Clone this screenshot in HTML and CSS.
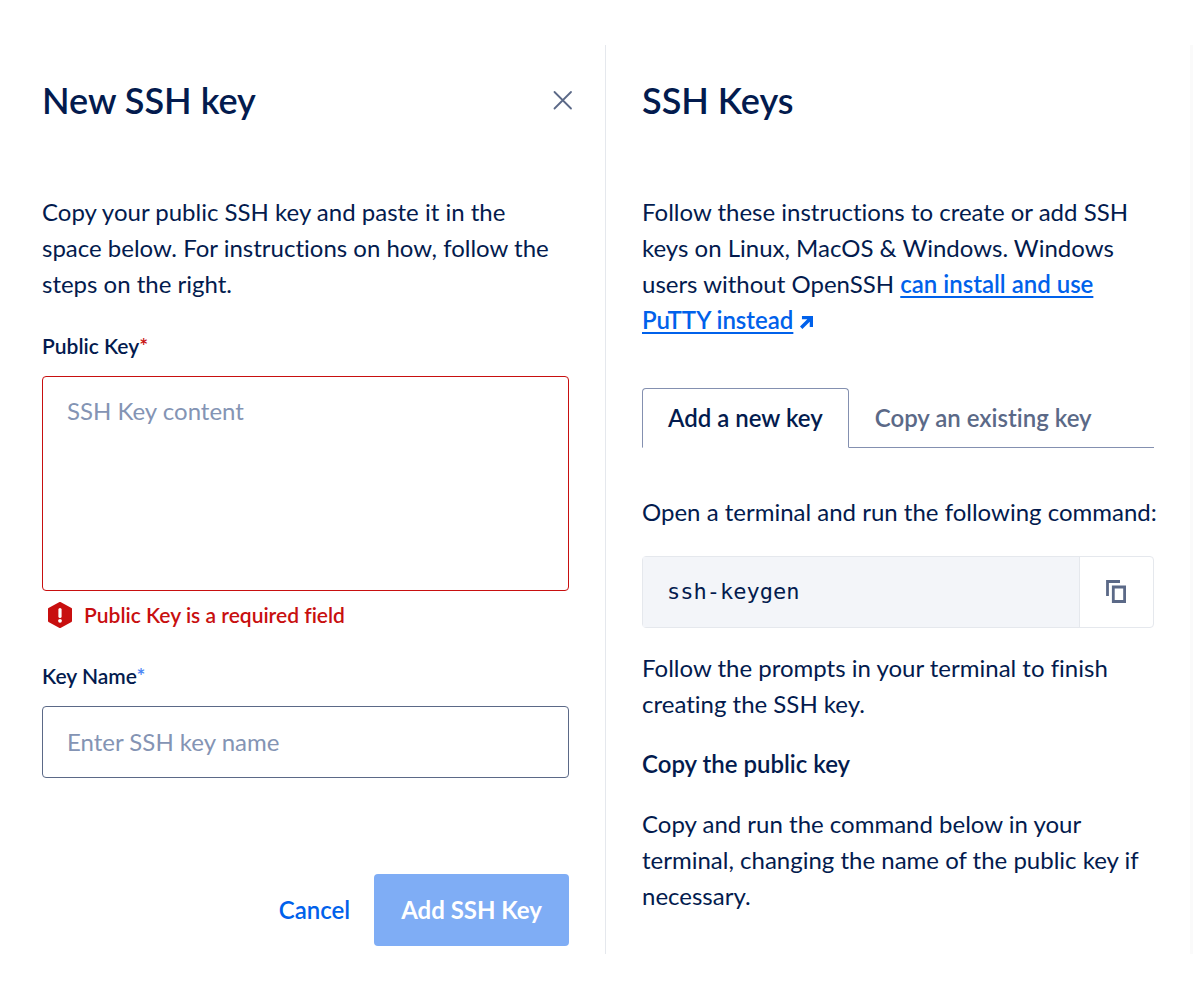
FILE: index.html
```html
<!DOCTYPE html>
<html lang="en">
<head>
<meta charset="utf-8">
<meta name="viewport" content="width=device-width, initial-scale=1">
<title>New SSH key</title>
<link rel="stylesheet" href="styles.css">
</head>
<body>
<main class="dialog">
  <form class="panel form-panel">
    <header class="panel-header">
      <h1 class="title">New SSH key</h1>
      <button class="close" type="button" aria-label="Close">
        <svg width="20" height="20" viewBox="0 0 20 20" aria-hidden="true"><path d="M1.500 2l16.500 16.500M18 2l-16.500 16.500" fill="none" stroke="currentColor" stroke-width="1.800" stroke-linecap="round"/></svg>
      </button>
    </header>
    <p class="text">Copy your public SSH key and paste it in the space below. For instructions on how, follow the steps on the right.</p>
    <div class="field">
      <label class="label" for="public-key">Public Key<span class="star star-error">*</span></label>
      <textarea class="control area" id="public-key" placeholder="SSH Key content" aria-describedby="public-key-error"></textarea>
      <p class="error" id="public-key-error">
        <svg class="error-icon" width="24" height="26" viewBox="0 0 24 26" aria-hidden="true"><path d="M12 1l11 6v12l-11 6L1 19V7z" fill="currentColor" stroke="currentColor" stroke-width="2" stroke-linejoin="round"/><path d="M12 7.500v7" stroke="#fff" stroke-width="3.200" stroke-linecap="round"/><circle cx="12" cy="18.800" r="1.900" fill="#fff"/></svg>
        Public Key is a required field
      </p>
    </div>
    <div class="field">
      <label class="label" for="key-name">Key Name<span class="star">*</span></label>
      <input class="control line" id="key-name" type="text" placeholder="Enter SSH key name">
    </div>
    <footer class="actions">
      <button class="cancel" type="button">Cancel</button>
      <button class="submit" type="submit" disabled>Add SSH Key</button>
    </footer>
  </form>
  <section class="panel help-panel">
    <header class="panel-header">
      <h2 class="title">SSH Keys</h2>
    </header>
    <p class="text">Follow these instructions to create or add SSH keys on Linux, MacOS &amp; Windows. Windows users without OpenSSH <a class="link" href="#putty">can install and use PuTTY instead</a> <svg width="13" height="13" viewBox="0 0 12 12" class="arrow" aria-hidden="true"><path d="M1.800 0H12v10.200H9V5.300L2.200 12 0 9.800 6.700 3H1.800z" fill="currentColor"/></svg></p>
    <div class="tabs" role="tablist">
      <button class="tab tab-active" type="button" role="tab" aria-selected="true">Add a new key</button>
      <button class="tab" type="button" role="tab" aria-selected="false">Copy an existing key</button>
    </div>
    <p class="text step">Open a terminal and run the following command:</p>
    <div class="command">
      <code class="code">ssh-keygen</code>
      <button class="copy" type="button" aria-label="Copy command">
        <svg width="22" height="24" viewBox="0 0 22 24" aria-hidden="true"><path d="M1.500 16V1.500H14M7.300 7h11.300v14.500H7.300z" fill="none" stroke="currentColor" stroke-width="2.800"/></svg>
      </button>
    </div>
    <p class="text">Follow the prompts in your terminal to finish creating the SSH key.</p>
    <h3 class="subtitle">Copy the public key</h3>
    <p class="text">Copy and run the command below in your terminal, changing the name of the public key if necessary.</p>
  </section>
</main>
</body>
</html>
```
FILE: styles.css
```css
* {
  box-sizing: border-box;
}

body {
  margin: 0;
  background: #fff;
  color: #031b4e;
  font-family: Lato, "Open Sans", sans-serif;
  font-size: 24px;
  line-height: 36px;
  font-variant-ligatures: none;
}

button,
input,
textarea {
  font: inherit;
}

button {
  padding: 0;
  border: 0;
  background: none;
  cursor: pointer;
}

h1,
h2,
h3,
p {
  margin: 0;
}

.dialog {
  display: grid;
  grid-template-columns: repeat(2, minmax(0, 1fr));
  padding: 45px 7px 46px 19px;
}

.form-panel {
  padding: 31px 36px 8px 23px;
  border-right: 1px solid #e5e8ed;
}

.help-panel {
  padding: 31px 36px 8px;
  border-right: 3px solid #fafafa;
}

.panel-header {
  display: flex;
  align-items: center;
  justify-content: space-between;
  margin-bottom: 70px;
}

.title {
  font-size: 36px;
  line-height: 48px;
  font-weight: 600;
}

.close {
  display: flex;
  margin-right: -4px;
  color: #5b6987;
}

.field {
  display: flex;
  flex-direction: column;
  margin-top: 24px;
}

.label {
  margin-bottom: 10px;
  font-size: 21px;
  line-height: 40px;
  font-weight: 600;
}

.star {
  color: #4a85f5;
}

.star-error {
  color: #c80f0f;
}

.control {
  width: 100%;
  border: 1px solid #5b6987;
  border-radius: 4px;
  padding: 16px 24px;
  background: #fff;
  color: inherit;
  outline: 0;
}

.control::placeholder {
  color: #8494b4;
  opacity: 1;
}

.area {
  height: 215px;
  border-color: #c80f0f;
  resize: none;
}

.line {
  height: 72px;
  padding-bottom: 18px;
}

.error {
  display: flex;
  align-items: center;
  gap: 12px;
  margin-top: 7px;
  padding-left: 6px;
  color: #c80f0f;
  font-size: 21px;
  line-height: 34px;
  font-weight: 600;
}

.actions {
  display: flex;
  justify-content: flex-end;
  gap: 24px;
  margin-top: 96px;
}

.cancel {
  color: #0061eb;
  font-weight: 600;
}

.submit {
  height: 72px;
  padding: 0 27px;
  border-radius: 4px;
  background: #7fadf5;
  color: #fff;
  font-weight: 700;
}

.link {
  color: #0061eb;
  font-weight: 600;
  text-decoration-thickness: 2px;
  text-underline-offset: 3px;
}

.arrow {
  color: #0061eb;
}

.tabs {
  display: flex;
  margin: 50px 0 46px;
  background: linear-gradient(#8490b0, #8490b0) bottom / 100% 1px no-repeat;
}

.tab {
  height: 60px;
  padding: 0 26px;
  color: #5b6987;
  font-weight: 600;
}

.tab-active {
  padding: 0 25px;
  border: 1px solid #8490b0;
  border-bottom-color: #fff;
  border-radius: 4px 4px 0 0;
  background: #fff;
  color: #031b4e;
}

.command {
  display: flex;
  height: 72px;
  margin: 26px 0 22px;
  border: 1px solid #e5e8ed;
  border-radius: 4px;
}

.code {
  display: flex;
  flex: 1;
  align-items: center;
  padding-left: 24px;
  background: #f3f5f9;
  font-family: "DejaVu Sans Mono", monospace;
  font-size: 22px;
}

.copy {
  display: flex;
  align-items: center;
  justify-content: center;
  width: 74px;
  border-left: 1px solid #e5e8ed;
  color: #5b6987;
}

.subtitle {
  margin: 24px 0;
  font-size: 24px;
  font-weight: 600;
}

@media (min-width: 1100px) {
  .step {
    white-space: nowrap;
  }
}

@media (max-width: 900px) {
  .dialog {
    grid-template-columns: 1fr;
  }
}
```
